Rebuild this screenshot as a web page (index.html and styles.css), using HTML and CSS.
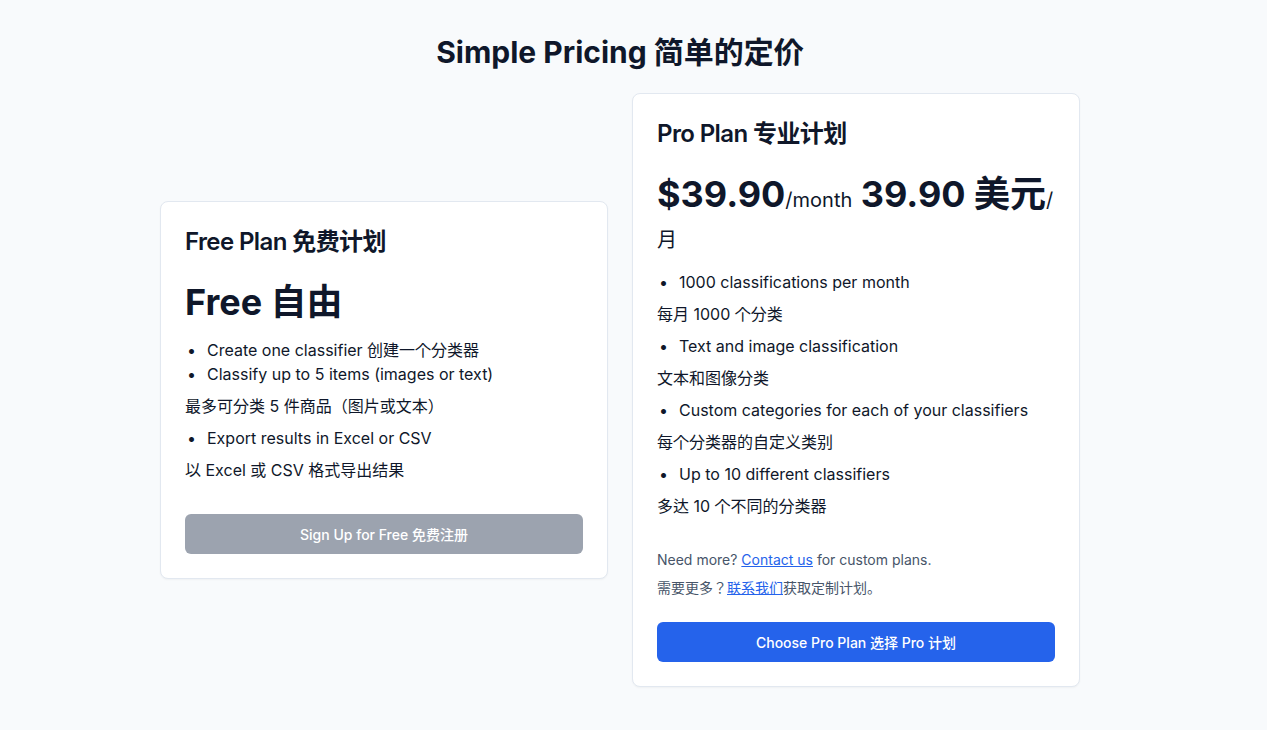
FILE: index.html
```html
<!DOCTYPE html>
<html lang="en">
<head>
<meta charset="utf-8">
<title>Simple Pricing</title>
<link rel="stylesheet" href="styles.css">
</head>
<body>
<main class="page">
  <h1 class="page-title">Simple Pricing 简单的定价</h1>
  <div class="plans">
    <section class="card">
      <h2 class="card-title">Free Plan 免费计划</h2>
      <div class="price">Free 自由</div>
      <ul class="features">
        <li>Create one classifier 创建一个分类器</li>
        <li>Classify up to 5 items (images or text)</li>
      </ul>
      <p class="zh">最多可分类 5 件商品（图片或文本）</p>
      <ul class="features">
        <li>Export results in Excel or CSV</li>
      </ul>
      <p class="zh last">以 Excel 或 CSV 格式导出结果</p>
      <button class="btn btn-gray">Sign Up for Free 免费注册</button>
    </section>
    <section class="card">
      <h2 class="card-title">Pro Plan 专业计划</h2>
      <div class="price">$39.90<span class="per">/month</span> 39.90 美元<span class="per">/月</span></div>
      <ul class="features">
        <li>1000 classifications per month</li>
      </ul>
      <p class="zh">每月 1000 个分类</p>
      <ul class="features">
        <li>Text and image classification</li>
      </ul>
      <p class="zh">文本和图像分类</p>
      <ul class="features">
        <li>Custom categories for each of your classifiers</li>
      </ul>
      <p class="zh">每个分类器的自定义类别</p>
      <ul class="features">
        <li>Up to 10 different classifiers</li>
      </ul>
      <p class="zh last">多达 10 个不同的分类器</p>
      <p class="note">Need more? <a href="#">Contact us</a> for custom plans.</p>
      <p class="note note-zh">需要更多？<a href="#">联系我们</a>获取定制计划。</p>
      <button class="btn btn-blue">Choose Pro Plan 选择 Pro 计划</button>
    </section>
  </div>
</main>
</body>
</html>
```

FILE: styles.css
```css
* { box-sizing: border-box; }

html, body {
  margin: 0;
  padding: 0;
  background: #f8fafc;
}

body {
  font-family: Inter, "Noto Sans CJK JP", sans-serif;
  color: #0f172a;
  font-size: 16px;
  line-height: 24px;
}

.page {
  width: 1240px;
  padding-top: 34px;
  padding-bottom: 40px;
}

.page-title {
  margin: 0 0 23px;
  text-align: center;
  font-size: 30px;
  line-height: 36px;
  font-weight: 700;
}

.plans {
  display: flex;
  justify-content: center;
  align-items: center;
  gap: 24px;
}

.card {
  width: 448px;
  background: #ffffff;
  border: 1px solid #e2e8f0;
  border-radius: 8px;
  box-shadow: 0 1px 2px rgba(0, 0, 0, 0.04);
  padding: 24px;
}

.card-title {
  margin: 0 0 24px;
  font-size: 24px;
  line-height: 32px;
  font-weight: 600;
  letter-spacing: -0.025em;
}

.price {
  font-size: 36px;
  line-height: 40px;
  font-weight: 700;
  margin-bottom: 16px;
}

.per {
  font-size: 20px;
  line-height: 28px;
  font-weight: 400;
}

.features {
  margin: 0;
  padding-left: 22px;
  list-style: disc;
}

.features li::marker {
  content: "\2022\2002\2009";
}

.zh {
  margin: 8px 0;
}

.zh.last {
  margin-bottom: 32px;
}

.note {
  margin: 0;
  font-size: 14px;
  line-height: 20px;
  color: #475569;
}

.note-zh {
  margin-top: 8px;
  margin-bottom: 24px;
}

.note a {
  color: #2563eb;
  text-decoration: underline;
}

.btn {
  display: block;
  width: 100%;
  height: 40px;
  border: none;
  border-radius: 6px;
  color: #ffffff;
  font-family: Inter, "Noto Sans CJK JP", sans-serif;
  font-size: 14px;
  font-weight: 500;
}

.btn-gray {
  background: #9ca3af;
}

.btn-blue {
  background: #2563eb;
}
```
